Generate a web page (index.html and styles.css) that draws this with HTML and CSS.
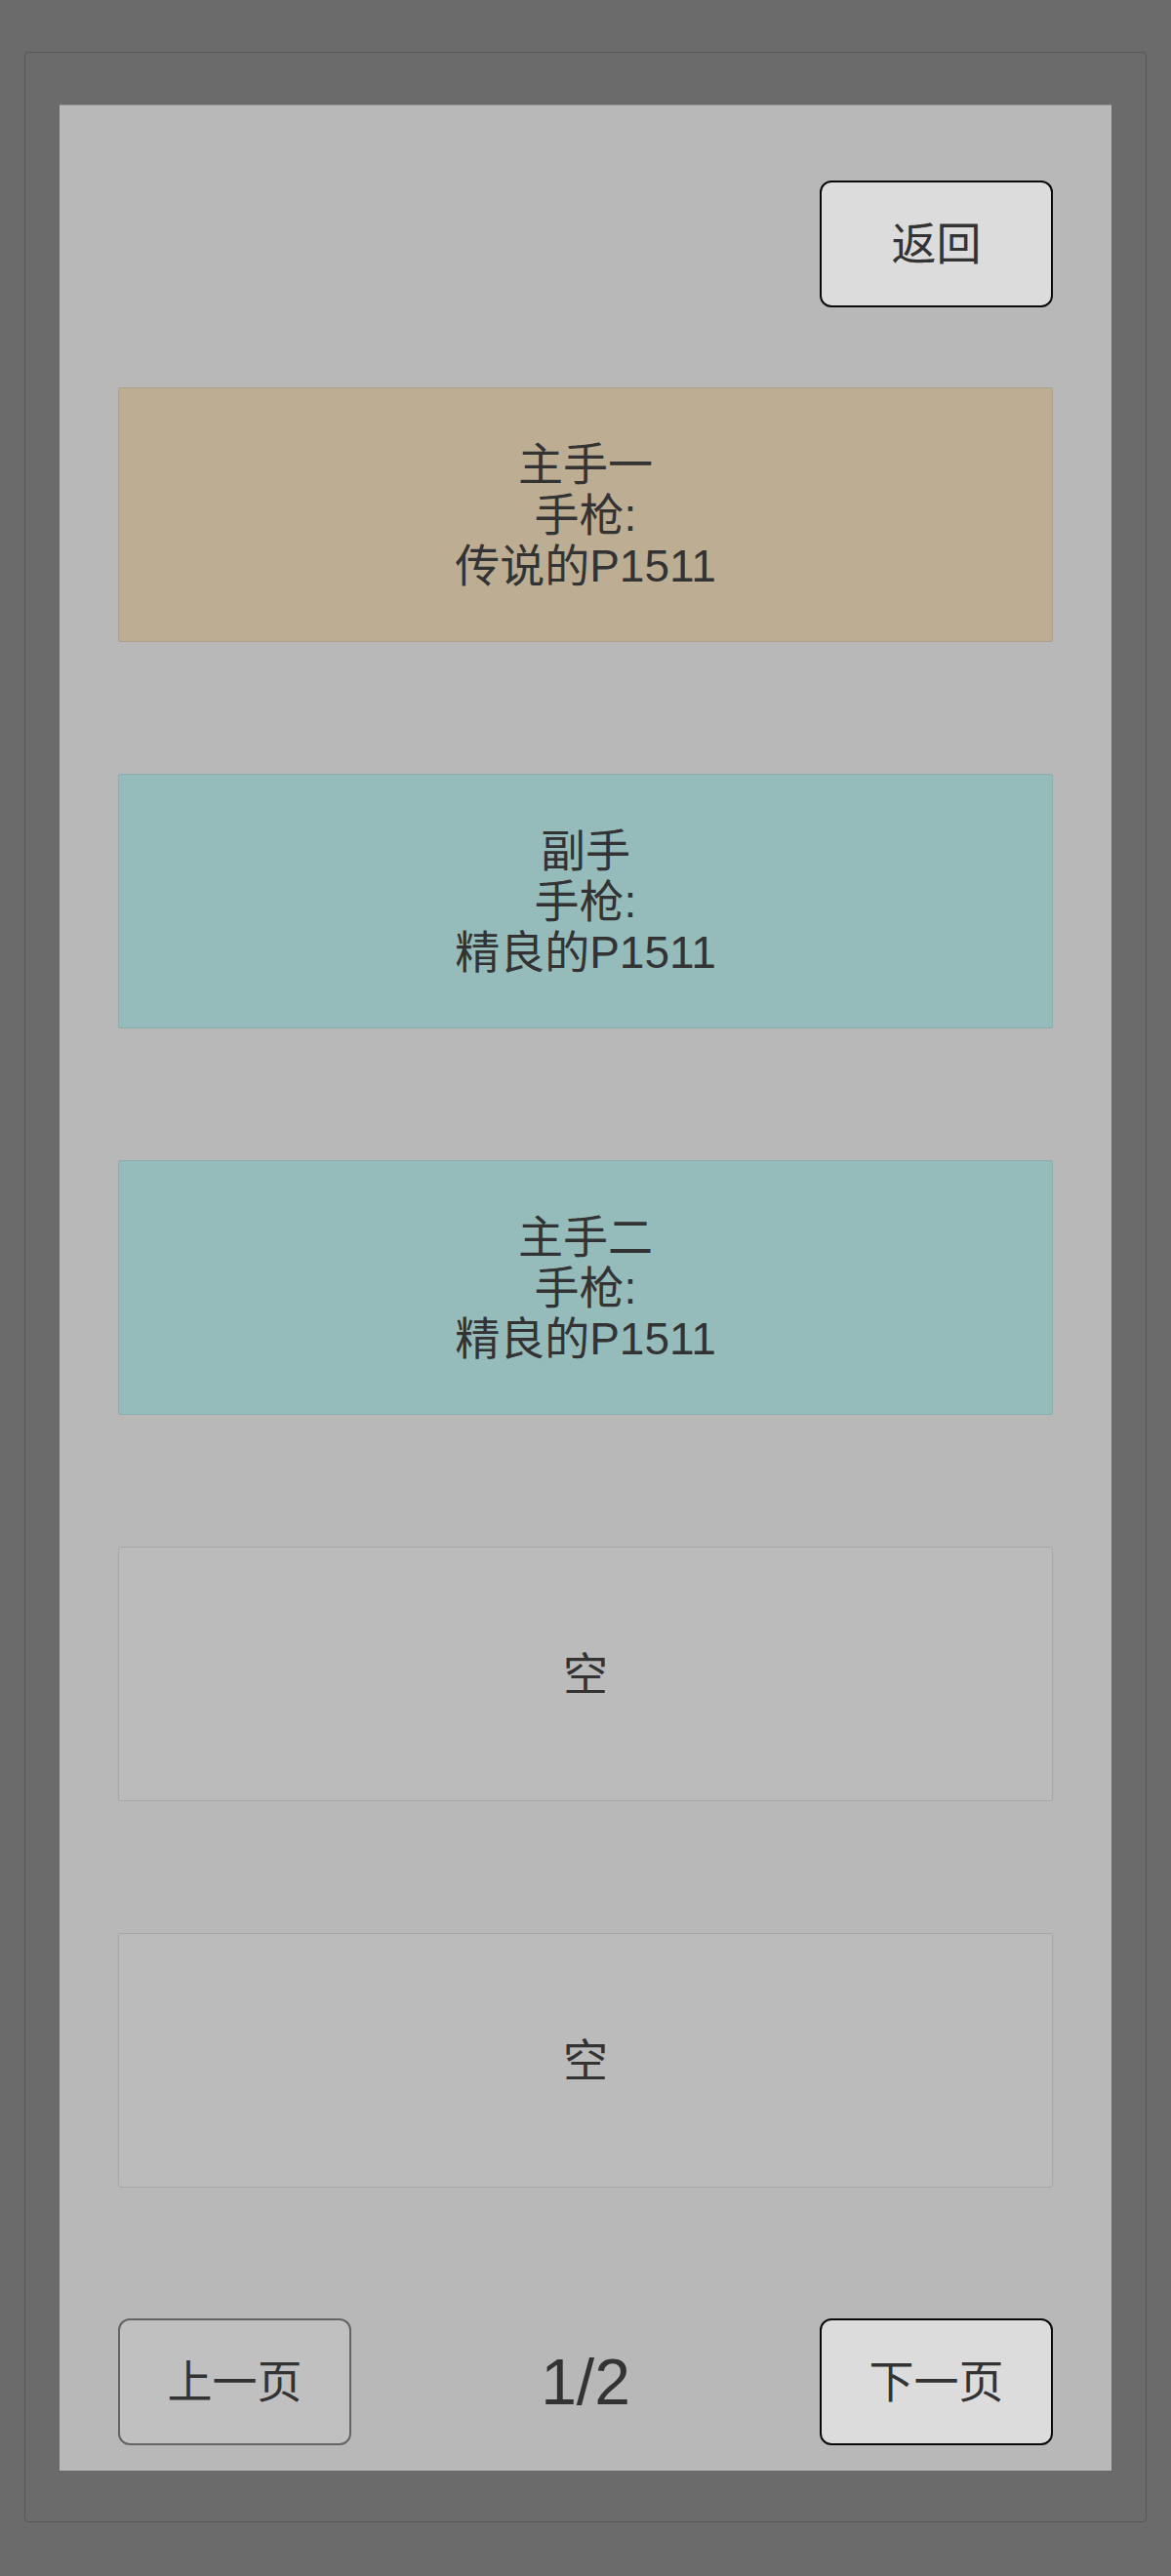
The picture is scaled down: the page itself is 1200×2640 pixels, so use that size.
FILE: index.html
```html
<!DOCTYPE html>
<html lang="zh-CN">

<head>
    <meta charset="UTF-8">
    <meta name="viewport" content="width=device-width, initial-scale=1.0">
    <title>装备</title>
    <link rel="stylesheet" href="styles.css">
</head>

<body>
    <div class="frame">
        <div class="panel">
            <div class="top-bar">
                <button class="btn">返回</button>
            </div>

            <!-- 武器槽 -->
            <div class="slots">
                <div class="slot legend">
                    <p>主手一</p>
                    <p>手枪:</p>
                    <p>传说的P1511</p>
                </div>
                <div class="slot fine">
                    <p>副手</p>
                    <p>手枪:</p>
                    <p>精良的P1511</p>
                </div>
                <div class="slot fine">
                    <p>主手二</p>
                    <p>手枪:</p>
                    <p>精良的P1511</p>
                </div>
                <div class="slot empty">
                    <p>空</p>
                </div>
                <div class="slot empty">
                    <p>空</p>
                </div>
            </div>

            <div class="pager">
                <button class="btn disabled">上一页</button>
                <span class="page-num">1/2</span>
                <button class="btn">下一页</button>
            </div>
        </div>
    </div>
</body>

</html>
```

FILE: styles.css
```css
* {
    margin: 0;
    padding: 0;
    box-sizing: border-box;
}

body {
    background-color: #6b6b6b;
    font-family: "Liberation Sans", "Noto Sans CJK SC", sans-serif;
    color: #333;
}

.frame {
    margin: 53px 25px 55px;
    height: 2532px;
    padding: 53px 35px 52px;
    border: 1px solid #575757;
    border-radius: 4px;
}

.panel {
    height: 100%;
    background-color: #b8b8b8;
    border-top: 1px solid #8c8c8c;
    padding: 77px 60px 26px;
    display: flex;
    flex-direction: column;
}

.top-bar {
    display: flex;
    justify-content: flex-end;
}

.btn {
    width: 239px;
    height: 130px;
    border: 2px solid #0a0a0a;
    border-radius: 12px;
    background-color: #dcdcdc;
    font: 46px/1 "Liberation Sans", "Noto Sans CJK SC", sans-serif;
    color: #333;
}

.btn.disabled {
    border-color: #646464;
    background-color: #c0c0c0;
}

.slots {
    margin-top: 82px;
    display: flex;
    flex-direction: column;
    gap: 135px;
}

.slot {
    height: 261px;
    border: 1px solid rgba(0, 0, 0, 0.07);
    border-radius: 3px;
    display: flex;
    flex-direction: column;
    justify-content: center;
    align-items: center;
    font-size: 46px;
    line-height: 52px;
    text-align: center;
}

.legend {
    background-color: #bcad93;
}

.fine {
    background-color: #95bcbb;
}

.empty {
    background-color: #bbbbbb;
    border-color: #a6a6a6;
}

.pager {
    margin-top: 134px;
    display: flex;
    justify-content: space-between;
    align-items: center;
}

.page-num {
    font-size: 66px;
}
```
